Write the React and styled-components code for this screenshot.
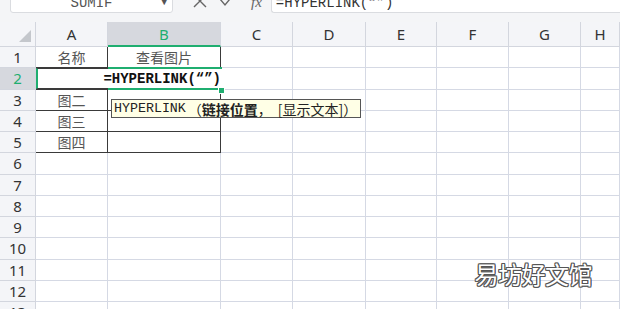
import { Fragment } from "react";
import styled, { createGlobalStyle } from "styled-components";

const Global = createGlobalStyle`
  html, body {
    margin: 0;
    padding: 0;
    background: #f4f5f7;
    overflow: hidden;
  }
`;

const COLS = ["A", "B", "C", "D", "E", "F", "G", "H"];
const WIDTHS = [72, 113, 72, 73, 71, 72, 72];
const GREEN = "#1fae70";

const Page = styled.div`
  width: 620px;
  height: 309px;
  position: relative;
  overflow: hidden;
  font-family: "Noto Sans", "Noto Sans CJK SC", sans-serif;
`;

const TopBar = styled.div`
  height: 22px;
  display: flex;
  align-items: flex-start;
  background: #f4f5f7;
  overflow: hidden;
`;

const NameBox = styled.div`
  margin: -8px 0 0 10px;
  width: 163px;
  height: 21px;
  box-sizing: border-box;
  background: #fff;
  border: 1px solid #dadce0;
  border-radius: 3px;
  position: relative;
  display: flex;
  align-items: center;
  justify-content: center;
  font-family: "Liberation Mono", monospace;
  font-size: 14px;
  color: #555;
`;

const Caret = styled.span`
  position: absolute;
  right: 5px;
  top: 5px;
  font-size: 9px;
  color: #555;
`;

const IconGroup = styled.div`
  display: flex;
  align-items: flex-start;
  gap: 12px;
  margin: -6px 0 0 20px;
  color: #666;
`;

const Fx = styled.span`
  font-family: "Liberation Serif", serif;
  font-style: italic;
  font-size: 15px;
  line-height: 16px;
  color: #666;
  margin-left: 4px;
`;

const FormulaBox = styled.div`
  flex: 1;
  margin: -8px 0 0 9px;
  height: 21px;
  box-sizing: border-box;
  background: #fff;
  border: 1px solid #dadce0;
  border-right: none;
  border-radius: 3px 0 0 3px;
  padding-left: 4px;
  display: flex;
  align-items: center;
  font-family: "Liberation Mono", monospace;
  font-size: 14px;
  color: #333;
`;

const Sheet = styled.div`
  position: relative;
  display: grid;
  grid-template-columns: 36px ${WIDTHS.map((w) => w + "px").join(" ")} 1fr;
  grid-template-rows: 25px repeat(13, 21.25px);
  background: #fff;
`;

const Corner = styled.div`
  background: #f4f5f8;
  border-right: 1px solid #d3d6de;
  border-bottom: 1px solid #d3d6de;
  position: relative;
  &::after {
    content: "";
    position: absolute;
    right: 4px;
    bottom: 4px;
    border-left: 12px solid transparent;
    border-bottom: 12px solid #c4c7cc;
  }
`;

const ColHead = styled.div`
  background: ${(p) => (p.$active ? "#d6d8de" : "#f4f5f8")};
  color: ${(p) => (p.$active ? GREEN : "#333")};
  border-right: 1px solid #d3d6de;
  border-bottom: ${(p) => (p.$active ? `2px solid ${GREEN}` : "1px solid #d3d6de")};
  display: flex;
  align-items: center;
  justify-content: center;
  font-size: 15px;
`;

const RowHead = styled.div`
  background: ${(p) => (p.$active ? "#d6d8de" : "#f4f5f8")};
  color: ${(p) => (p.$active ? GREEN : "#333")};
  border-right: 1px solid #d3d6de;
  border-bottom: 1px solid #d3d6de;
  display: flex;
  align-items: center;
  justify-content: center;
  font-size: 15px;
`;

const Cell = styled.div`
  border-right: 1px solid ${(p) => (p.$boxed ? "#3a3a3a" : "#d5d9e4")};
  border-bottom: 1px solid ${(p) => (p.$boxed ? "#3a3a3a" : "#d5d9e4")};
  display: flex;
  align-items: center;
  justify-content: center;
  font-family: "Noto Sans CJK SC", sans-serif;
  font-size: 14px;
  color: #555;
  overflow: hidden;
  white-space: nowrap;
`;

const Editor = styled.div`
  position: absolute;
  left: 36px;
  top: 46px;
  width: 185px;
  height: 21px;
  box-sizing: border-box;
  background: #fff;
  border-left: 2px solid ${GREEN};
  border-top: 1px solid #3a3a3a;
  border-bottom: 1px solid #3a3a3a;
  display: flex;
  align-items: center;
  justify-content: flex-end;
  font-family: "Liberation Mono", monospace;
  font-weight: bold;
  font-size: 14px;
  color: #111;
`;

const Selection = styled.div`
  position: absolute;
  left: 108px;
  top: 45px;
  width: 114px;
  height: 23px;
  box-sizing: border-box;
  border-top: 2px solid ${GREEN};
  border-bottom: 2px solid ${GREEN};
  pointer-events: none;
`;

const Handle = styled.div`
  position: absolute;
  left: 218px;
  top: 65px;
  width: 5px;
  height: 5px;
  background: ${GREEN};
  border: 1px solid #fff;
`;

const Tooltip = styled.div`
  position: absolute;
  left: 111px;
  top: 77px;
  height: 19px;
  box-sizing: border-box;
  padding: 0 3px 0 2px;
  background: #ffffe6;
  border: 1px solid #555;
  display: flex;
  align-items: center;
  font-family: "Liberation Mono", "Noto Sans CJK SC", monospace;
  font-size: 13.3px;
  color: #222;
  white-space: pre;
`;

const Cjk = styled.span`
  font-family: "Noto Sans CJK SC", sans-serif;
  font-size: 14px;
  font-weight: ${(p) => (p.$bold ? 700 : 400)};
  margin: ${(p) => p.$gap || "0"};
`;

const Watermark = styled.div`
  position: absolute;
  right: 28px;
  bottom: 18px;
  font-family: "Noto Sans CJK SC", sans-serif;
  font-size: 24px;
  color: #fff;
  letter-spacing: -0.5px;
  text-shadow: 1px 0 0 #555, -1px 0 0 #555, 0 1px 0 #555, 0 -1px 0 #555,
    1px 1px 0 #555, -1px -1px 0 #555, 1px -1px 0 #555, -1px 1px 0 #555;
`;

const data = {
  1: ["名称", "查看图片"],
  3: ["图二", ""],
  4: ["图三", ""],
  5: ["图四", ""],
};

export default function App() {
  const rows = Array.from({ length: 13 }, (_, i) => i + 1);
  return (
    <Page>
      <Global />
      <TopBar>
        <NameBox>
          SUMIF
          <Caret>▼</Caret>
        </NameBox>
        <IconGroup>
          <svg width="14" height="14" viewBox="0 0 14 14" fill="none" stroke="#666" strokeWidth="1.4">
            <path d="M1 1 L13 13 M13 1 L1 13" />
          </svg>
          <svg width="16" height="14" viewBox="0 0 16 14" fill="none" stroke="#666" strokeWidth="1.4">
            <path d="M1 5 L6 11 L15 0" />
          </svg>
          <Fx>fx</Fx>
        </IconGroup>
        <FormulaBox>=HYPERLINK(“”)</FormulaBox>
      </TopBar>
      <Sheet>
        <Corner />
        {COLS.map((c) => (
          <ColHead key={c} $active={c === "B"}>
            {c}
          </ColHead>
        ))}
        {rows.map((r) => (
          <Fragment key={r}>
            <RowHead $active={r === 2}>{r}</RowHead>
            {COLS.map((c, ci) => {
              const boxed = ci < 2 && r <= 5;
              const txt = data[r] && ci < 2 ? data[r][ci] : "";
              return (
                <Cell key={c + r} $boxed={boxed}>
                  {txt}
                </Cell>
              );
            })}
          </Fragment>
        ))}
        <Editor>=HYPERLINK(“”)</Editor>
        <Selection />
        <Handle />
        <Tooltip>
          HYPERLINK<Cjk $gap="0 0 0 2px">（</Cjk>
          <Cjk $bold>链接位置</Cjk>
          <Cjk $gap="0 6px 0 0">，</Cjk>
          <Cjk>[显示文本]）</Cjk>
        </Tooltip>
      </Sheet>
      <Watermark>易坊好文馆</Watermark>
    </Page>
  );
}
